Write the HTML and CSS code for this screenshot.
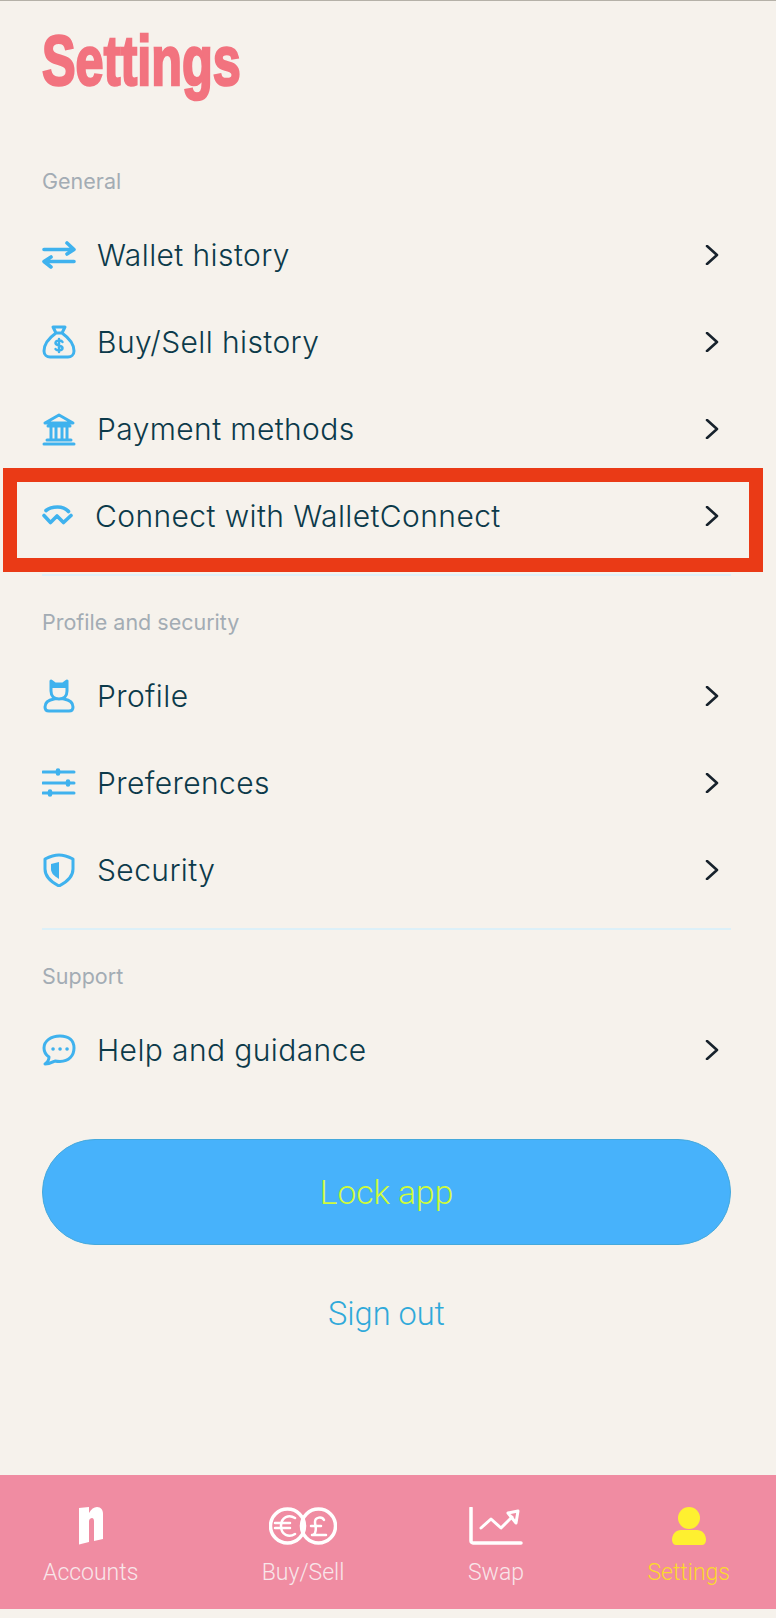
FILE: index.html
```html
<!DOCTYPE html>
<html lang="en">
<head>
  <meta charset="UTF-8" />
  <meta name="viewport" content="width=device-width, initial-scale=1.0"/>
  <title>Settings</title>
  <link rel="stylesheet" href="styles.css">
</head>
<body>
  <div class="screen">
    <main class="content">
      <h1 class="page-title">Settings</h1>

      <section class="group">
        <h2 class="group-label">General</h2>
        <a class="row">
          <svg class="row-icon icon-bold" viewBox="0 0 34 34"><path d="M2 11.500H32M25 5l7 6.500L25 16M32 23.500H2M9 19l-7 4.500L9 29"/></svg>
          <span class="row-text">Wallet history</span>
          <svg class="chevron" viewBox="0 0 14 20"><path d="M2 1l10 9-10 9"/></svg>
        </a>
        <a class="row">
          <svg class="row-icon" viewBox="0 0 34 34"><path d="M11 2h12l-3 6h-6zM14 8C7 13 2 20 2 26c0 4 3 6 6 6h18c3 0 6-2 6-6 0-6-5-13-12-18"/><path class="thin" d="M20.500 17c-1-2-7-2-7 1s7 2 7 5-6 3-7 1M17 14v13"/></svg>
          <span class="row-text">Buy/Sell history</span>
          <svg class="chevron" viewBox="0 0 14 20"><path d="M2 1l10 9-10 9"/></svg>
        </a>
        <a class="row">
          <svg class="row-icon" viewBox="0 0 34 34"><path d="M3 11L17 3l14 8zM6 14h22M9 15v12M14 15v12M20 15v12M25 15v12M5 28h24M2 32h30"/></svg>
          <span class="row-text">Payment methods</span>
          <svg class="chevron" viewBox="0 0 14 20"><path d="M2 1l10 9-10 9"/></svg>
        </a>
        <a class="row row-connect">
          <svg class="row-icon icon-bold" viewBox="0 0 34 34"><path d="M4 11.500C7 9 11 8 15.500 8s8 1 11 4.500M2 16.500l6.500 7 6.500-6.500 6.500 6.500 7.500-7"/></svg>
          <span class="row-text">Connect with WalletConnect</span>
          <svg class="chevron" viewBox="0 0 14 20"><path d="M2 1l10 9-10 9"/></svg>
        </a>
        <div class="highlight"></div>
      </section>

      <section class="group">
        <h2 class="group-label">Profile and security</h2>
        <a class="row">
          <svg class="row-icon" viewBox="0 0 34 34"><path class="solid" d="M9 2l4 3h8l4-3v7H9z"/><path d="M9 2l4 3h8l4-3v10c0 5-3 8-8 8s-8-3-8-8zM12 20c-6 1-9 4-9 8 0 3 2 4 4 4h20c2 0 4-1 4-4 0-4-3-7-9-8"/></svg>
          <span class="row-text">Profile</span>
          <svg class="chevron" viewBox="0 0 14 20"><path d="M2 1l10 9-10 9"/></svg>
        </a>
        <a class="row">
          <svg class="row-icon" viewBox="0 0 34 34"><path d="M1 6h31M1 17h31M1 27h31"/><path class="knob" d="M16 4.500v3M26 15.500v3M8 25.500v3"/></svg>
          <span class="row-text">Preferences</span>
          <svg class="chevron" viewBox="0 0 14 20"><path d="M2 1l10 9-10 9"/></svg>
        </a>
        <a class="row">
          <svg class="row-icon" viewBox="0 0 34 34"><path d="M17 2c5 0 10 2 14 4v10c0 8-6 13-14 17C9 29 3 24 3 16V6c4-2 9-4 14-4z"/><path class="solid" d="M17 9v17c-5-3-8-6-8-10v-5z"/></svg>
          <span class="row-text">Security</span>
          <svg class="chevron" viewBox="0 0 14 20"><path d="M2 1l10 9-10 9"/></svg>
        </a>
      </section>

      <section class="group">
        <h2 class="group-label">Support</h2>
        <a class="row">
          <svg class="row-icon" viewBox="0 0 34 34"><path d="M18 3C9 3 2 8 2 15c0 4 2 7 5 9 0 3-1 5-4 7 5 0 8-2 10-3 2 .5 3 .5 5 .5 9 0 14-6 14-13.500S27 3 18 3z"/><path class="thin dots" d="M11 16h.1M18 16h.1M25 16h.1"/></svg>
          <span class="row-text">Help and guidance</span>
          <svg class="chevron" viewBox="0 0 14 20"><path d="M2 1l10 9-10 9"/></svg>
        </a>
      </section>

      <button class="lock-btn">Lock app</button>
      <a class="sign-out">Sign out</a>
    </main>

    <nav class="tabbar">
      <div class="tab">
        <svg class="tab-icon" viewBox="0 0 26 38"><path class="fill" d="M1 1l10-1v6c2-4 5-6 8-6 4 0 6 3 6 7v25l-9 2V14c0-2-1-3-2-3s-3 1-3 3v21L1 37.500z"/></svg>
        <span>Accounts</span>
      </div>
      <div class="tab">
        <svg class="tab-icon" viewBox="0 0 68 38"><circle cx="18.500" cy="19" r="17"/><circle cx="49.500" cy="19" r="17"/><path class="thin" d="M26 11c-6-4-14-1-14 8s8 12 14 8M6 16h15M6 21h15"/><path class="thin" d="M55 13c-2-4-9-3-9 2 0 4 2 6 0 11-1 2-2 2-3 2h14M42 19h10"/></svg>
        <span>Buy/Sell</span>
      </div>
      <div class="tab">
        <svg class="tab-icon" viewBox="0 0 54 38"><path d="M2 1v33c0 1 1 2 2 2h48"/><path class="mid" d="M12 21l10-9 10 9 11-11"/><path class="mid" d="M39 6l10-2-2 12z"/></svg>
        <span>Swap</span>
      </div>
      <div class="tab tab-active">
        <svg class="tab-icon" viewBox="0 0 34 38"><circle class="fill" cx="17" cy="11" r="11"/><path class="fill" d="M9 23h16c5 0 9 4 9 10 0 3-2 5-4 5H4c-2 0-4-2-4-5 0-6 4-10 9-10z"/></svg>
        <span>Settings</span>
      </div>
    </nav>
  </div>
</body>
</html>
```

FILE: styles.css
```css
* { box-sizing: border-box; }

body {
  margin: 0;
  font-family: 'Inter', sans-serif;
  background: #f6f2ec;
  color: #0c3a4a;
}

.screen {
  display: flex;
  flex-direction: column;
  height: 1618px;
  border-top: 1px solid #b5b1a8;
  overflow: hidden;
}

.content {
  flex: 1;
  padding: 0 45px 0 42px;
}

.page-title {
  margin: 0;
  padding-top: 22px;
  height: 165px;
  font-family: 'Liberation Sans', sans-serif;
  font-size: 70px;
  line-height: 76px;
  font-weight: 700;
  color: #f2737f;
  -webkit-text-stroke: 2.5px #f2737f;
  transform: scaleX(0.72);
  transform-origin: left top;
}

.group {
  position: relative;
  border-bottom: 2px solid #dcf0f8;
  padding-bottom: 15px;
  margin-bottom: 31px;
}

.group:nth-of-type(3) {
  border-bottom: none;
  margin-bottom: 0;
}

.group-label {
  margin: 0 0 15px;
  font-size: 21.5px;
  line-height: 30px;
  font-weight: 400;
  color: #a3acb4;
}

.row {
  display: flex;
  align-items: center;
  height: 87px;
}

.row-icon {
  width: 34px;
  height: 34px;
  margin-right: 21px;
  flex-shrink: 0;
  fill: none;
  stroke: #3fb2ee;
  stroke-width: 3;
  stroke-linecap: round;
  stroke-linejoin: round;
}

.icon-bold { stroke-width: 3.6; }
.row-icon .thin { stroke-width: 2.5; }
.row-icon .knob { stroke-width: 4.5; }
.row-icon .dots { stroke-width: 3.5; }
.row-icon .solid { fill: #3fb2ee; stroke: none; }

.row-text {
  flex: 1;
  font-size: 30px;
  font-weight: 300;
  letter-spacing: 0.4px;
}

.row-connect .row-text { margin-left: -2px; }

.chevron {
  width: 14px;
  height: 20px;
  margin-right: 12px;
  fill: none;
  stroke: #17222c;
  stroke-width: 2.6;
  stroke-linecap: round;
  stroke-linejoin: round;
}

/* red annotation box drawn over the WalletConnect row */
.highlight {
  position: absolute;
  left: -39px;
  right: -32px;
  top: 302px;
  height: 104px;
  border: 14px solid #ea3a16;
}

.lock-btn {
  display: block;
  width: 100%;
  height: 106px;
  margin-top: 31px;
  border: 1px solid #45a9dc;
  border-radius: 54px;
  background: #47b2fb;
  color: #d0fb3a;
  font-family: 'Roboto', sans-serif;
  font-weight: 300;
  font-size: 33.5px;
}

.sign-out {
  display: block;
  margin-top: 50px;
  text-align: center;
  font-family: 'Roboto', sans-serif;
  font-weight: 300;
  font-size: 32.5px;
  color: #2fa9da;
}

.tabbar {
  display: flex;
  justify-content: space-between;
  align-items: flex-start;
  height: 134px;
  margin-bottom: 9px;
  padding: 32px 46px 0 43px;
  background: #f08ca2;
}

.tab {
  display: flex;
  flex-direction: column;
  align-items: center;
  font-family: 'Roboto', sans-serif;
  font-weight: 300;
  font-size: 23px;
  color: #f8e6ea;
}

.tab-icon {
  height: 38px;
  margin-bottom: 14px;
  fill: none;
  stroke: #fff;
  stroke-width: 3.5;
  stroke-linecap: round;
  stroke-linejoin: round;
}

.tab-icon .thin { stroke-width: 2.5; }
.tab-icon .mid { stroke-width: 3; }
.tab-icon .fill { fill: #fff; stroke: none; }

.tab-active { color: #fbd92c; }
.tab-active .tab-icon .fill { fill: #fef030; }
```
